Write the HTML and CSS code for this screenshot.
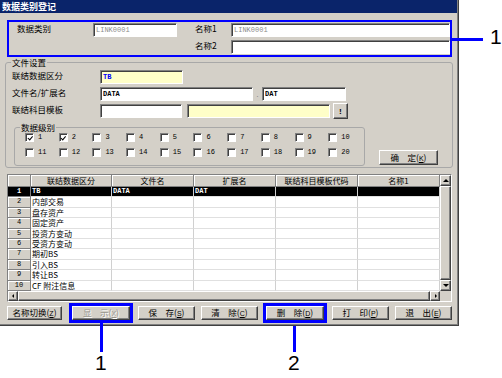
FILE: index.html
```html
<!DOCTYPE html>
<html lang="zh-CN">
<head>
  <meta charset="UTF-8">
  <title>数据类别登记</title>
  <link rel="stylesheet" href="styles.css">
</head>
<body>
<div class="window">
  <div class="titlebar">数据类别登记</div>

  <div class="head">
    <label class="lbl">数据类别</label>
    <input class="inp" value="LINK0001" disabled>
    <span></span>
    <label class="lbl">名称1</label>
    <input class="inp" value="LINK0001" disabled>
    <label class="lbl name2">名称2</label>
    <input class="inp">
  </div>

  <fieldset class="group files">
    <legend>文件设置</legend>
    <div class="frow">
      <label class="flbl">联结数据区分</label>
      <input class="inp yellow code" value="TB">
    </div>
    <div class="frow">
      <label class="flbl">文件名/扩展名</label>
      <input class="inp fname" value="DATA">
      <span class="dot">.</span>
      <input class="inp ext" value="DAT">
    </div>
    <div class="frow tall">
      <label class="flbl">联结科目模板</label>
      <input class="inp tpl">
      <input class="inp yellow tpl-name">
      <button class="btn pick">!</button>
    </div>
    <div class="level-row">
      <fieldset class="group levels">
        <legend>数据级别</legend>
        <div class="checks">
          <label class="chk"><input type="checkbox" checked>1</label>
          <label class="chk"><input type="checkbox" checked>2</label>
          <label class="chk"><input type="checkbox">3</label>
          <label class="chk"><input type="checkbox">4</label>
          <label class="chk"><input type="checkbox">5</label>
          <label class="chk"><input type="checkbox">6</label>
          <label class="chk"><input type="checkbox">7</label>
          <label class="chk"><input type="checkbox">8</label>
          <label class="chk"><input type="checkbox">9</label>
          <label class="chk"><input type="checkbox">10</label>
          <label class="chk"><input type="checkbox">11</label>
          <label class="chk"><input type="checkbox">12</label>
          <label class="chk"><input type="checkbox">13</label>
          <label class="chk"><input type="checkbox">14</label>
          <label class="chk"><input type="checkbox">15</label>
          <label class="chk"><input type="checkbox">16</label>
          <label class="chk"><input type="checkbox">17</label>
          <label class="chk"><input type="checkbox">18</label>
          <label class="chk"><input type="checkbox">19</label>
          <label class="chk"><input type="checkbox">20</label>
        </div>
      </fieldset>
      <button class="btn ok">确　定(<u>K</u>)</button>
    </div>
  </fieldset>

  <div class="sheet">
    <div class="table">
      <div class="hd"></div>
      <div class="hd">联结数据区分</div>
      <div class="hd">文件名</div>
      <div class="hd">扩展名</div>
      <div class="hd">联结科目模板代码</div>
      <div class="hd">名称1</div>

      <div class="row sel"><div class="rn">1</div><div class="cell">TB</div><div class="cell">DATA</div><div class="cell">DAT</div><div class="cell"></div><div class="cell"></div></div>
      <div class="row"><div class="rn">2</div><div class="cell">内部交易</div><div class="cell"></div><div class="cell"></div><div class="cell"></div><div class="cell"></div></div>
      <div class="row"><div class="rn">3</div><div class="cell">盘存资产</div><div class="cell"></div><div class="cell"></div><div class="cell"></div><div class="cell"></div></div>
      <div class="row"><div class="rn">4</div><div class="cell">固定资产</div><div class="cell"></div><div class="cell"></div><div class="cell"></div><div class="cell"></div></div>
      <div class="row"><div class="rn">5</div><div class="cell">投资方变动</div><div class="cell"></div><div class="cell"></div><div class="cell"></div><div class="cell"></div></div>
      <div class="row"><div class="rn">6</div><div class="cell">受资方变动</div><div class="cell"></div><div class="cell"></div><div class="cell"></div><div class="cell"></div></div>
      <div class="row"><div class="rn">7</div><div class="cell">期初BS</div><div class="cell"></div><div class="cell"></div><div class="cell"></div><div class="cell"></div></div>
      <div class="row"><div class="rn">8</div><div class="cell">引入BS</div><div class="cell"></div><div class="cell"></div><div class="cell"></div><div class="cell"></div></div>
      <div class="row"><div class="rn">9</div><div class="cell">转让BS</div><div class="cell"></div><div class="cell"></div><div class="cell"></div><div class="cell"></div></div>
      <div class="row"><div class="rn">10</div><div class="cell">CF 附注信息</div><div class="cell"></div><div class="cell"></div><div class="cell"></div><div class="cell"></div></div>
    </div>
    <div class="vscroll">
      <span class="sb up"></span>
      <span class="thumb"></span>
      <span class="sb down"></span>
    </div>
    <div class="hscroll">
      <span class="sb left"></span>
      <span class="thumb"></span>
      <span class="sb right"></span>
    </div>
    <div class="corner"></div>
  </div>

  <div class="actions">
    <button class="btn switch">名称切换(<u>Z</u>)</button>
    <button class="btn marked" disabled>显　示(<u>X</u>)</button>
    <button class="btn">保　存(<u>S</u>)</button>
    <button class="btn">清　除(<u>C</u>)</button>
    <button class="btn marked">删　除(<u>D</u>)</button>
    <button class="btn">打　印(<u>P</u>)</button>
    <button class="btn">退　出(<u>E</u>)</button>
  </div>
</div>

<!-- 说明标注 -->
<div class="callout-line top-line"></div>
<div class="callout-num num-top">1</div>
<div class="callout-line show-line"></div>
<div class="callout-num num-show">1</div>
<div class="callout-line del-line"></div>
<div class="callout-num num-del">2</div>
</body>
</html>
```

FILE: styles.css
```css
body {
    margin: 0;
    width: 502px;
    height: 378px;
    position: relative;
    overflow: hidden;
    background: #fff;
    font-family: "Noto Sans CJK SC", sans-serif;
    font-size: 8.5px;
    color: #000;
}

/* 窗口 */
.window {
    width: 459px;
    height: 326px;
    box-sizing: border-box;
    background: #d4d0c8;
    border-right: 1px solid #404040;
    border-bottom: 1px solid #404040;
    box-shadow: inset -1px -1px #808080;
}

.titlebar {
    height: 13px;
    margin-right: 1px;
    padding-left: 2px;
    background: #0a246a;
    color: #fff;
    font-weight: bold;
    font-size: 9px;
    line-height: 13px;
}

/* 顶部：数据类别 / 名称 */
.head {
    margin: 7px 0 0 7px;
    width: 445px;
    height: 37px;
    box-sizing: border-box;
    border: 2px solid #0000ff;
    padding: 1px 0 0 8px;
    display: grid;
    grid-template-columns: 76px 84px 18px 36px 1fr;
    grid-template-rows: 14px 14px;
    row-gap: 3px;
}

.lbl {
    line-height: 11px;
}

.name2 {
    grid-column: 4;
}

/* 输入框 */
.inp {
    box-sizing: border-box;
    width: 100%;
    height: 14px;
    margin: 0;
    padding: 0 2px;
    border: 1px solid;
    border-color: #808080 #fff #fff #808080;
    box-shadow: inset 1px 1px #404040;
    background: #fff;
    font-family: "Liberation Mono", monospace;
    font-size: 7px;
    font-weight: bold;
    color: #000;
    outline: none;
}

.inp:disabled {
    background: #fff;
    color: #8c8c8c;
    font-weight: normal;
}

.inp.yellow {
    background: #ffffc8;
}

.inp.code {
    color: #0000ff;
}

/* 分组框 */
.group {
    margin: 0;
    min-width: 0;
    box-sizing: border-box;
    border: 1px solid #a8a8a8;
    border-radius: 3px;
}

.group legend {
    padding: 0 1px;
    margin-left: -1px;
    line-height: 10px;
}

.files {
    margin-left: 5px;
    width: 448px;
    padding: 3px 0 1px 6px;
}

.frow {
    display: flex;
    align-items: center;
    height: 14px;
    margin-bottom: 3px;
}

.frow.tall {
    height: 16px;
    margin-top: -1px;
}

.frow .inp {
    flex: none;
}

.flbl {
    width: 88px;
    flex: none;
    line-height: 11px;
    align-self: flex-start;
}

.frow.tall .flbl {
    margin-top: 1px;
}

.code { width: 83px; }
.fname { width: 153px; }
.ext { width: 84px; }
.tpl { width: 82px; }
.tpl-name { width: 143px; margin-left: 5px; }

.dot {
    width: 9px;
    text-align: center;
    color: #808080;
    font-size: 7px;
}

/* 按钮 */
.btn {
    box-sizing: border-box;
    height: 14px;
    margin: 0;
    padding: 0;
    background: #d4d0c8;
    border: 1px solid;
    border-color: #fff #404040 #404040 #fff;
    box-shadow: inset -1px -1px #808080;
    font-family: "Noto Sans CJK SC", sans-serif;
    font-size: 8.5px;
    line-height: 11px;
    color: #000;
    white-space: nowrap;
}

.btn u {
    font-family: "Liberation Sans", sans-serif;
    font-size: 7px;
}

.btn:disabled {
    color: #9a9890;
    text-shadow: 1px 1px #fff;
}

.pick {
    width: 15px;
    height: 16px;
    margin-left: 3px;
    font-family: "Liberation Mono", monospace;
    font-weight: bold;
    font-size: 8px;
}

/* 数据级别 */
.level-row {
    display: flex;
    align-items: flex-end;
    margin-left: 2px;
}

.levels {
    width: 351px;
    padding: 1px 0 8px 10px;
}

.levels legend {
    margin-left: -5px;
}

.checks {
    display: grid;
    grid-template-columns: repeat(10, 33.7px);
    row-gap: 6px;
}

.chk {
    display: flex;
    align-items: center;
    height: 9px;
    font-family: "Liberation Mono", monospace;
    font-size: 7px;
    line-height: 9px;
}

.chk input {
    appearance: none;
    -webkit-appearance: none;
    position: relative;
    flex: none;
    width: 9px;
    height: 9px;
    margin: 0 4px 0 0;
    box-sizing: border-box;
    border: 1px solid;
    border-color: #808080 #fff #fff #808080;
    box-shadow: inset 1px 1px #404040;
    background: #fff;
}

.chk input:checked::after {
    content: "";
    position: absolute;
    left: 2.5px;
    top: 0.5px;
    width: 1.5px;
    height: 3.5px;
    border: solid #000;
    border-width: 0 1.5px 1.5px 0;
    transform: rotate(40deg);
}

.ok {
    width: 59px;
    height: 15px;
    margin: 0 0 1px 14px;
}

/* 表格 */
.sheet {
    margin: 6px 0 0 7px;
    width: 445px;
    height: 128px;
    box-sizing: border-box;
    border: 1px solid;
    border-color: #808080 #fff #fff #808080;
    display: grid;
    grid-template-columns: 432px 11px;
    grid-template-rows: 116px 10px;
}

.table {
    display: grid;
    grid-template-columns: 23px 81px 82px 82px 82px 82px;
    grid-template-rows: 12px repeat(10, 10.4px);
    background: #fff;
    overflow: hidden;
}

.row {
    display: contents;
}

.hd,
.rn {
    box-sizing: border-box;
    background: #d4d0c8;
    border-right: 1px solid #808080;
    border-bottom: 1px solid #808080;
    box-shadow: inset 1px 1px #fff;
    text-align: center;
    overflow: hidden;
    white-space: nowrap;
}

.hd {
    font-size: 8px;
    line-height: 11px;
}

.rn {
    font-family: "Liberation Mono", monospace;
    font-size: 7px;
    line-height: 9px;
}

.cell {
    box-sizing: border-box;
    border-right: 1px solid #d0d0d0;
    border-bottom: 1px solid #e0e0e0;
    padding-left: 1px;
    font-size: 8px;
    line-height: 9px;
    white-space: nowrap;
    overflow: hidden;
}

.sel .cell,
.sel .rn {
    background: #000;
    color: #fff;
    box-shadow: none;
    font-family: "Liberation Mono", monospace;
    font-size: 7px;
    font-weight: bold;
}

/* 滚动条 */
.vscroll {
    display: flex;
    flex-direction: column;
    background: #e8e6e0;
}

.hscroll {
    display: flex;
    background: #e8e6e0;
}

.corner {
    background: #d4d0c8;
}

.sb,
.thumb {
    box-sizing: border-box;
    background: #d4d0c8;
    border: 1px solid;
    border-color: #fff #404040 #404040 #fff;
    box-shadow: inset -1px -1px #808080;
}

.sb {
    flex: none;
    display: flex;
    align-items: center;
    justify-content: center;
}

.vscroll .sb {
    height: 11px;
}

.hscroll .sb {
    width: 10px;
}

.thumb {
    flex: 1;
}

.sb::after {
    content: "";
    width: 0;
    height: 0;
    border: 3px solid transparent;
}

.up::after { border-bottom-color: #000; margin-top: -3px; }
.down::after { border-top-color: #000; margin-top: 3px; }
.left::after { border-right-color: #000; margin-left: -3px; border-width: 2.5px; }
.right::after { border-left-color: #000; margin-left: 3px; border-width: 2.5px; }

/* 底部按钮 */
.actions {
    display: flex;
    gap: 6px;
    margin: 4px 0 0 7px;
}

.actions .btn {
    width: 57px;
}

.actions .switch {
    width: 55px;
    margin-right: 2px;
}

.actions .marked {
    width: 58px;
    margin: 0 2px;
    outline: 3px solid #0000ff;
}

/* 标注 */
.callout-line {
    position: absolute;
    background: #0000ff;
}

.top-line {
    left: 452px;
    top: 38px;
    width: 31px;
    height: 3px;
}

.show-line {
    left: 100px;
    top: 323px;
    width: 3px;
    height: 29px;
}

.del-line {
    left: 293px;
    top: 326px;
    width: 3px;
    height: 26px;
}

.callout-num {
    position: absolute;
    font-family: "Liberation Sans", sans-serif;
    font-size: 21px;
    line-height: 21px;
    color: #000;
}

.num-top {
    left: 490px;
    top: 26px;
}

.num-show {
    left: 95px;
    top: 352px;
}

.num-del {
    left: 288px;
    top: 352px;
}
```
